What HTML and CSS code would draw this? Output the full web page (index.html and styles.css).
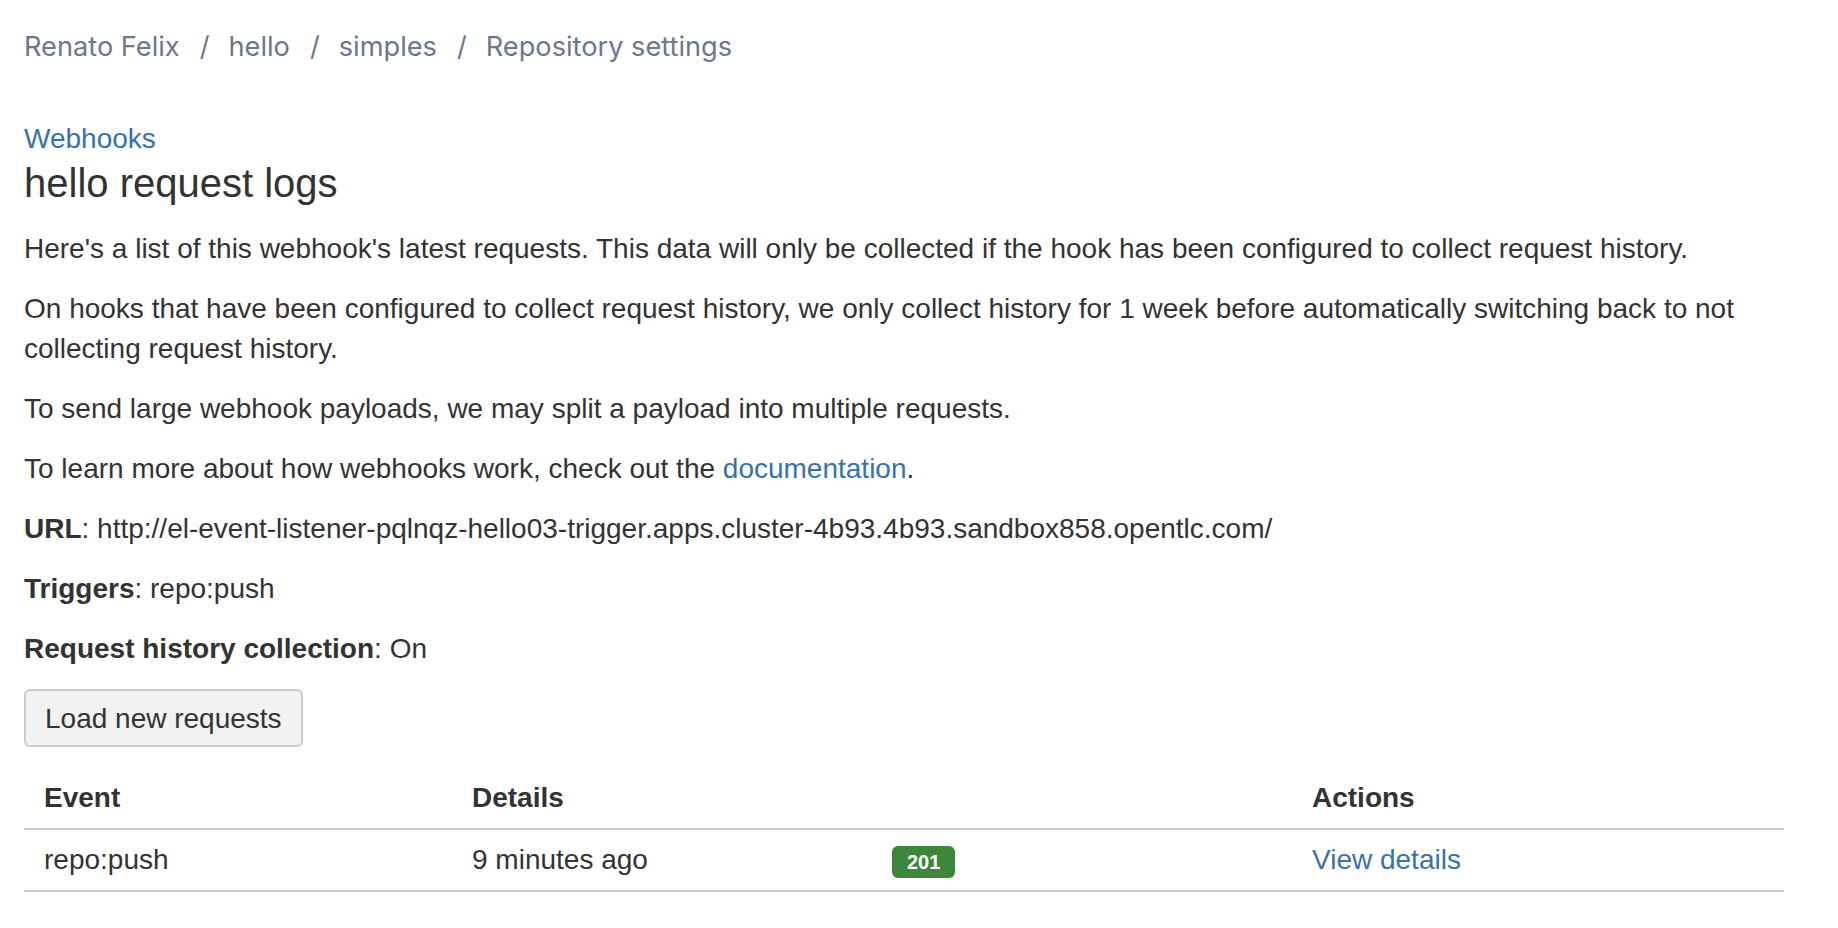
FILE: index.html
```html
<!DOCTYPE html>
<html lang="en">
<head>
<meta charset="utf-8">
<title>hello request logs</title>
<link rel="stylesheet" href="styles.css">
</head>
<body>
<div class="page">
  <nav class="breadcrumbs">
    <a class="crumb" href="#">Renato Felix</a><span class="sep">/</span><a class="crumb" href="#">hello</a><span class="sep">/</span><a class="crumb" href="#">simples</a><span class="sep">/</span><a class="crumb" href="#">Repository settings</a>
  </nav>
  <header class="page-header">
    <a class="link back-link" href="#">Webhooks</a>
    <h1 class="title">hello request logs</h1>
  </header>
  <p class="para">Here's a list of this webhook's latest requests. This data will only be collected if the hook has been configured to collect request history.</p>
  <p class="para">On hooks that have been configured to collect request history, we only collect history for 1 week before automatically switching back to not collecting request history.</p>
  <p class="para">To send large webhook payloads, we may split a payload into multiple requests.</p>
  <p class="para">To learn more about how webhooks work, check out the <a class="link" href="#">documentation</a>.</p>
  <p class="para"><strong>URL</strong>: http://el-event-listener-pqlnqz-hello03-trigger.apps.cluster-4b93.4b93.sandbox858.opentlc.com/</p>
  <p class="para"><strong>Triggers</strong>: repo:push</p>
  <p class="para"><strong>Request history collection</strong>: On</p>
  <button class="button" type="button">Load new requests</button>
  <table class="logs">
    <colgroup>
      <col class="c-event"><col class="c-details"><col class="c-status"><col class="c-actions">
    </colgroup>
    <thead>
      <tr>
        <th>Event</th>
        <th>Details</th>
        <th></th>
        <th>Actions</th>
      </tr>
    </thead>
    <tbody>
      <tr>
        <td>repo:push</td>
        <td>9 minutes ago</td>
        <td><span class="lozenge">201</span></td>
        <td><a class="link" href="#">View details</a></td>
      </tr>
    </tbody>
  </table>
</div>
</body>
</html>
```

FILE: styles.css
```css
html, body {
  margin: 0;
  padding: 0;
  background: #ffffff;
}

body {
  font-family: "Liberation Sans", Arial, Helvetica, sans-serif;
  font-size: 28px;
  line-height: 40px;
  color: #333333;
}

.page {
  padding: 27px 54px 40px 24px;
}

.breadcrumbs {
  display: flex;
  align-items: center;
  font-family: Inter, "Noto Sans", sans-serif;
  font-size: 27.2px;
  line-height: 40px;
  color: #6b778c;
  margin-bottom: 52px;
}

.crumb {
  color: #6b778c;
  text-decoration: none;
}

.sep {
  margin: 0 19px 0 20px;
  color: #6b778c;
}

.page-header {
  display: flex;
  flex-direction: column;
  align-items: flex-start;
  margin-bottom: 22px;
}

.link {
  color: #3572b0;
  text-decoration: none;
}

.title {
  margin: 0;
  font-size: 40px;
  line-height: 48px;
  font-weight: normal;
  color: #333333;
}

.para {
  margin: 0 0 20px 0;
}

.para strong {
  font-weight: bold;
}

.button {
  display: inline-block;
  box-sizing: border-box;
  height: 58px;
  padding: 0 19px;
  margin: 0;
  font-family: "Liberation Sans", Arial, Helvetica, sans-serif;
  font-size: 28px;
  line-height: 56px;
  color: #333333;
  background: #f2f2f2;
  border: 2px solid #cccccc;
  border-radius: 6px;
  cursor: pointer;
}

.logs {
  width: 1760px;
  margin-top: 21px;
  border-collapse: collapse;
  table-layout: fixed;
}

.c-event { width: 428px; }
.c-details { width: 420px; }
.c-status { width: 420px; }
.c-actions { width: 492px; }

.logs th,
.logs td {
  text-align: left;
  padding: 10px 20px;
  line-height: 40px;
  border-bottom: 2px solid #cccccc;
  vertical-align: middle;
}

.logs th {
  font-weight: bold;
  color: #333333;
}

.lozenge {
  display: inline-block;
  height: 32px;
  line-height: 32px;
  padding: 0 15px;
  font-size: 20px;
  font-weight: bold;
  color: #ffffff;
  background: #3b873b;
  border-radius: 6px;
  vertical-align: middle;
}
```
